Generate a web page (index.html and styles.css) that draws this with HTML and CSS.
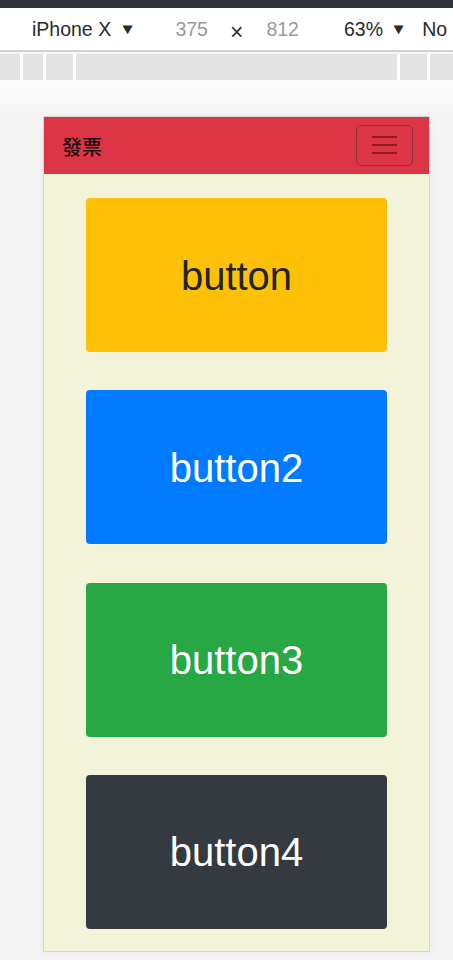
FILE: index.html
```html
<!DOCTYPE html>
<html lang="zh-Hant">
<head>
<meta charset="utf-8">
<title>發票</title>
<link rel="stylesheet" href="styles.css">
</head>
<body>
<div class="topbar"></div>
<div class="toolbar">
  <span class="device-name">iPhone X <span class="caret">▼</span></span>
  <span class="dim first">375</span>
  <span class="times">×</span>
  <span class="dim">812</span>
  <span class="zoom-level">63% <span class="caret">▼</span></span>
  <span class="throttle">No</span>
</div>
<div class="rule-line"></div>
<div class="ruler">
  <div class="seg s1"></div>
  <div class="seg s2"></div>
  <div class="seg s3"></div>
  <div class="seg s4"></div>
  <div class="seg s5"></div>
  <div class="seg s6"></div>
</div>
<div class="stage">
  <div class="device">
    <nav class="navbar">
      <span class="brand">發票</span>
      <button class="toggler" type="button" aria-label="menu">
        <span class="bar"></span><span class="bar"></span><span class="bar"></span>
      </button>
    </nav>
    <main class="content">
      <button class="big-btn warning" type="button">button</button>
      <button class="big-btn primary" type="button">button2</button>
      <button class="big-btn success" type="button">button3</button>
      <button class="big-btn dark" type="button">button4</button>
    </main>
  </div>
</div>
</body>
</html>
```
FILE: styles.css
```css
html, body {
  margin: 0;
  padding: 0;
}
body {
  width: 453px;
  height: 960px;
  overflow: hidden;
  background: #f3f3f3;
  font-family: "Liberation Sans", Arial, sans-serif;
}
.topbar {
  height: 8px;
  background: #303337;
}
.toolbar {
  height: 42px;
  background: #ffffff;
  display: flex;
  align-items: center;
  font-size: 19.5px;
  color: #2a2a2a;
  white-space: nowrap;
}
.device-name {
  margin-left: 32px;
}
.caret {
  display: inline-block;
  font-size: 15px;
  margin-left: 3px;
  transform: scaleX(1.15);
  position: relative;
  top: -2px;
}
.dim {
  color: #999999;
}
.dim.first {
  margin-left: 41px;
}
.times {
  margin-left: 22px;
  margin-right: 23px;
  font-size: 23px;
  color: #333;
  position: relative;
  top: 3px;
}
.zoom-level {
  margin-left: 45px;
}
.throttle {
  margin-left: 16px;
}
.rule-line {
  height: 2px;
  background: #d0d0d0;
  border-bottom: 2px solid #f7f7f7;
}
.ruler {
  height: 26px;
  display: flex;
  gap: 3px;
  background: #ffffff;
  border-bottom: 1px solid #fafafa;
}
.seg {
  background: #e3e3e3;
  height: 100%;
}
.s1 { width: 20px; }
.s2 { width: 20px; }
.s3 { width: 27px; }
.s4 { width: 321px; }
.s5 { width: 27px; }
.s6 { width: 23px; }
.stage {
  padding: 35px 0 0 43px;
  background: linear-gradient(#fafafa, #f3f3f3 60px);
  height: 880px;
  box-sizing: border-box;
}
.device {
  width: 387px;
  height: 836px;
  box-sizing: border-box;
  border: 1px solid #d6d6d6;
  background: #f3f3da;
  box-shadow: 0 0 8px rgba(0,0,0,0.05);
  display: flex;
  flex-direction: column;
}
.navbar {
  height: 57px;
  background: #dc3545;
  display: flex;
  align-items: center;
  justify-content: space-between;
  padding: 0 16px 0 18px;
  flex-shrink: 0;
}
.brand {
  font-family: "Noto Sans CJK TC", "Noto Sans CJK SC", sans-serif;
  font-size: 20px;
  font-weight: 500;
  color: #1a0f10;
  margin-top: 1px;
}
.toggler {
  width: 57px;
  height: 41px;
  box-sizing: border-box;
  border: 1.5px solid #93313b;
  border-radius: 5px;
  background: transparent;
  display: flex;
  flex-direction: column;
  align-items: center;
  justify-content: center;
  gap: 6px;
  padding: 0;
  margin-top: -1px;
}
.bar {
  display: block;
  width: 25px;
  height: 2px;
  background: #8c1d28;
}
.content {
  flex: 1;
  display: flex;
  flex-direction: column;
  align-items: center;
  gap: 38.33px;
  padding-top: 24px;
}
.big-btn {
  width: 301px;
  height: 154px;
  flex-shrink: 0;
  border: none;
  border-radius: 4px;
  font-family: "Liberation Sans", Arial, sans-serif;
  font-size: 40px;
  color: #ffffff;
  padding: 2px 0 0;
}
.warning { background: #ffc107; color: #212529; }
.primary { background: #007bff; }
.success { background: #28a745; }
.dark { background: #343a40; }
```
